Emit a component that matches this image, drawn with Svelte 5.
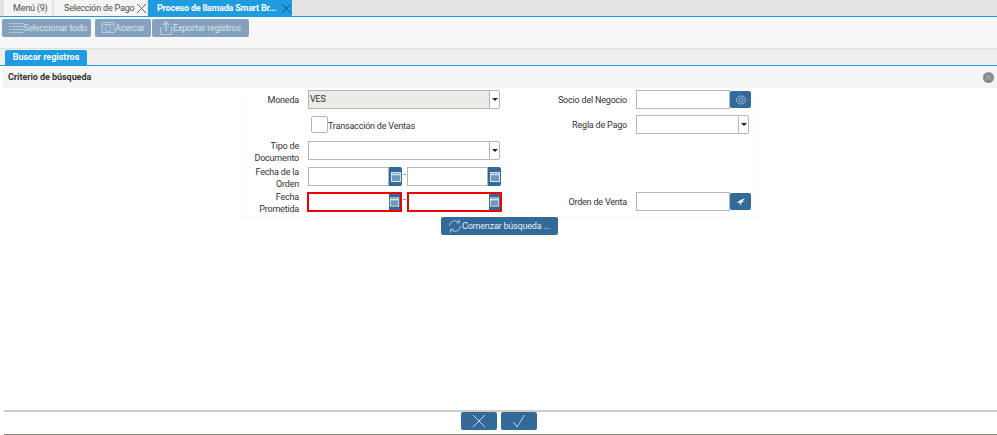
<script>
  let tabs = [
    { label: 'Menú (9)', w: 48 },
    { label: 'Selección de Pago', w: 93, close: true },
    { label: 'Proceso de llamada Smart Br...', w: 144, close: true, active: true }
  ];
</script>

{#snippet calendar()}
  <svg viewBox="0 0 12 12" width="12" height="12" fill="#6f97ba" stroke="#d5e3ef" stroke-width="1">
    <rect x="1.5" y="1.5" width="9" height="9" />
    <path d="M1.500 3.500h9" stroke-width="1.500" />
  </svg>
{/snippet}

{#snippet dateInput(required)}
  <div class="date" class:required>
    <div class="date-box"></div>
    <div class="date-btn">{@render calendar()}</div>
  </div>
{/snippet}

{#snippet combo(disabled)}
  <div class="combo" class:disabled>
    <div class="combo-text">{disabled ? 'VES' : ''}</div>
    <div class="combo-btn"><span class="arrow"></span></div>
  </div>
{/snippet}

<div class="page">
  <div class="tabbar">
    {#each tabs as tab}
      <div class="tab" class:active={tab.active} style="width: {tab.w}px">
        <span class="tab-label">{tab.label}</span>
        {#if tab.close}
          <svg class="tab-close" viewBox="0 0 11 11" width="11" height="11">
            <path d="M1 1l9 9M10 1l-9 9" stroke={tab.active ? '#1f4a68' : '#5f6468'} stroke-width="1" fill="none" />
          </svg>
        {/if}
      </div>
    {/each}
  </div>

  <div class="toolbar">
    <div class="tool select">
      <svg viewBox="0 0 14 12" width="14" height="12" fill="none" stroke="#b9cad9">
        <path d="M0 1.500h2M3 1.500h11M0 4.500h2M3 4.500h11M0 7.500h2M3 7.500h11M0 10.500h2M3 10.500h11" />
      </svg>
      <span>Seleccionar todo</span>
    </div>
    <div class="tool zoom">
      <svg viewBox="0 0 14 12" width="14" height="12" fill="none" stroke="#b9cad9">
        <path d="M1 .5h12v10h-12zM1 2.500h12" />
        <circle cx="7" cy="6.500" r="3" />
        <path d="M9 9l2 2.500" />
      </svg>
      <span>Acercar</span>
    </div>
    <div class="tool export">
      <svg viewBox="0 0 14 14" width="14" height="14" fill="none" stroke="#b9cad9">
        <path d="M3.500 6.500h-2v7h11v-7h-2" />
        <path d="M7 10V1M4 4l3-3 3 3" stroke-width="1.600" />
      </svg>
      <span>Exportar registros</span>
    </div>
  </div>

  <div class="subtabs">
    <div class="subtab">Buscar registros</div>
  </div>

  <div class="group-head">
    <span>Criterio de búsqueda</span>
    <span class="collapse">
      <svg viewBox="0 0 5 5" width="5" height="5" fill="none" stroke="#bcbcbc" stroke-width="1">
        <path d="M.5 2.500l2-2 2 2M.5 4.500l2-2 2 2" />
      </svg>
    </span>
  </div>

  <div class="form">
    <div class="label one">Moneda</div>
    <div class="field">{@render combo(true)}</div>
    <div class="label one">Socio del Negocio</div>
    <div class="field">
      <div class="search">
        <div class="search-box"></div>
        <div class="search-btn">
          <svg viewBox="0 0 10 10" width="10" height="10" fill="none" stroke="#9fbbd2" stroke-width="1">
            <ellipse cx="5" cy="5" rx="4.500" ry="4" />
            <circle cx="5" cy="5" r="2" />
          </svg>
        </div>
      </div>
    </div>

    <div class="label"></div>
    <div class="field check-field">
      <span class="check"></span>
      <span class="check-text">Transacción de Ventas</span>
    </div>
    <div class="label one">Regla de Pago</div>
    <div class="field">
      <div class="combo short">
        <div class="combo-text"></div>
        <div class="combo-btn"><span class="arrow"></span></div>
      </div>
    </div>

    <div class="label">Tipo de<br />Documento</div>
    <div class="field">{@render combo(false)}</div>
    <div class="label"></div>
    <div class="field"></div>

    <div class="label">Fecha de la<br />Orden</div>
    <div class="field range">
      {@render dateInput(false)}
      <span class="dash">-</span>
      {@render dateInput(false)}
    </div>
    <div class="label"></div>
    <div class="field"></div>

    <div class="label">Fecha<br />Prometida</div>
    <div class="field range">
      {@render dateInput(true)}
      <span class="dash">-</span>
      {@render dateInput(true)}
    </div>
    <div class="label one">Orden de Venta</div>
    <div class="field">
      <div class="search">
        <div class="search-box"></div>
        <div class="search-btn">
          <svg viewBox="0 0 10 10" width="10" height="10" fill="#eef3f7">
            <path d="M9 1.500C6 2 3 3.500 1 6l3-.3L3.600 8.500C5 7.500 5.500 6 6 5l3-.3-2.500-.7z" />
          </svg>
        </div>
      </div>
    </div>
  </div>

  <div class="start-row">
    <div class="start">
      <svg viewBox="0 0 14 14" width="14" height="14" fill="none" stroke="#a9c2d6" stroke-width="1">
        <path d="M1.500 7a5.500 5.500 0 0 1 9.500-3.700M12.500 7a5.500 5.500 0 0 1-9.500 3.700" />
        <path d="M11.500 .5v3.300h-3.300M2.500 13.500v-3.300h3.300" />
      </svg>
      <span>Comenzar búsqueda ...</span>
    </div>
  </div>

  <div class="spacer"></div>

  <div class="footer">
    <div class="foot-btn">
      <svg viewBox="0 0 14 14" width="14" height="14" fill="none" stroke="#c3d4e2" stroke-width="1">
        <path d="M1 1l12 12M13 1l-12 12" />
      </svg>
    </div>
    <div class="foot-btn">
      <svg viewBox="0 0 14 14" width="14" height="14" fill="none" stroke="#c3d4e2" stroke-width="1">
        <path d="M1.500 8l3.500 5L12.500 1" />
      </svg>
    </div>
  </div>
</div>

<style>
  :global(body) {
    margin: 0;
    background: #fff;
  }

  .page {
    width: 997px;
    height: 435px;
    display: flex;
    flex-direction: column;
    overflow: hidden;
    font-family: Roboto, "Liberation Sans", sans-serif;
    font-size: 9px;
    letter-spacing: -0.2px;
    color: #333;
    background: #fff;
  }

  .tabbar {
    height: 16px;
    display: flex;
    gap: 2px;
    padding-left: 4px;
    background: #e3e3e3;
    border-bottom: 1px solid #1f9ce0;
    flex-shrink: 0;
  }

  .tab {
    display: flex;
    align-items: center;
    justify-content: space-between;
    box-sizing: border-box;
    padding: 0 0 0 9px;
    background: #f5f5f5;
    color: #4d4d4d;
    white-space: nowrap;
  }

  .tab:nth-child(2) {
    padding-left: 10px;
  }

  .tab.active {
    margin-left: -1px;
    background: #1f9ce0;
    color: #fff;
    font-weight: 700;
    padding-left: 9px;
  }

  .tab-close {
    flex-shrink: 0;
  }

  .toolbar {
    height: 31px;
    box-sizing: border-box;
    display: flex;
    gap: 1px;
    padding: 2px;
    background: #f7f7f7;
    flex-shrink: 0;
  }

  .tool {
    height: 18px;
    display: flex;
    align-items: center;
    box-sizing: border-box;
    padding-left: 7px;
    background: #84a2bd;
    border-radius: 2px;
    color: #dbe3ea;
    white-space: nowrap;
  }

  .tool.select {
    width: 89px;
    margin-right: 3px;
  }

  .tool.zoom {
    width: 56px;
    padding-left: 6px;
  }

  .tool.export {
    width: 97px;
  }

  .subtabs {
    height: 16px;
    display: flex;
    align-items: flex-end;
    padding-left: 5px;
    background: #eeeeee;
    border-top: 1px solid #e0e0e0;
    border-bottom: 1px solid #1f9ce0;
    flex-shrink: 0;
  }

  .subtab {
    width: 82px;
    height: 15px;
    line-height: 15px;
    text-align: center;
    background: #1f9ce0;
    color: #fff;
    font-weight: 700;
    letter-spacing: 0;
    border-radius: 2px 2px 0 0;
  }

  .group-head {
    height: 22px;
    margin-left: 3px;
    padding: 0 3px 0 5px;
    display: flex;
    align-items: center;
    justify-content: space-between;
    background: #f5f5f5;
    color: #333;
    font-weight: 700;
    letter-spacing: -0.05px;
    flex-shrink: 0;
  }

  .collapse {
    width: 11px;
    height: 11px;
    border-radius: 50%;
    background: #8a8a8a;
    display: flex;
    align-items: center;
    justify-content: center;
  }

  .form {
    width: 512px;
    margin-left: 245px;
    display: grid;
    grid-template-columns: 54px 203px 125px 130px;
    grid-template-rows: 25px 26px 26px 25px 25px;
    padding-top: 2px;
    box-shadow: 0 1px 2px rgba(0, 0, 0, 0.05);
    flex-shrink: 0;
  }

  .label {
    display: flex;
    justify-content: flex-end;
    text-align: right;
    line-height: 11.500px;
    white-space: nowrap;
  }

  .label.one {
    padding-top: 5px;
  }

  .field {
    padding-left: 9px;
    box-sizing: border-box;
  }

  .combo {
    width: 192px;
    height: 19px;
    display: flex;
    box-sizing: border-box;
  }

  .combo.short {
    width: 113px;
  }

  .combo-text {
    flex: 1;
    border: 1px solid #b5b5b5;
    border-right: 0;
    padding-left: 1px;
    line-height: 17px;
    background: #fff;
  }

  .combo.disabled .combo-text {
    background: #ebebe8;
  }

  .combo-btn {
    width: 11px;
    display: flex;
    align-items: center;
    justify-content: center;
    background: #fff;
    border: 1px solid #b5b5b5;
    box-sizing: border-box;
    border-radius: 0 2px 2px 0;
  }

  .arrow {
    width: 0;
    height: 0;
    border: 3px solid transparent;
    border-top: 3px solid #222;
    border-bottom: 0;
  }

  .check-field {
    display: flex;
    align-items: center;
    height: 19px;
    padding-left: 12px;
  }

  .check {
    width: 15px;
    height: 15px;
    border: 1px solid #b5b5b5;
    border-radius: 2px;
    background: #fff;
  }

  .check-text {
    margin-top: 2px;
  }

  .search {
    width: 115px;
    height: 19px;
    display: flex;
  }

  .search-box {
    flex: 1;
    border: 1px solid #b5b5b5;
    background: #fff;
  }

  .search-btn {
    width: 21px;
    height: 17px;
    margin-top: 1px;
    display: flex;
    align-items: center;
    justify-content: center;
    background: #336a99;
    border-radius: 2px;
  }

  .range {
    display: flex;
    align-items: flex-start;
  }

  .dash {
    width: 5px;
    text-align: center;
    line-height: 14px;
  }

  .date {
    width: 94px;
    height: 19px;
    display: flex;
    box-sizing: border-box;
  }

  .date-box {
    flex: 1;
    border: 1px solid #b5b5b5;
    background: #fff;
  }

  .date-btn {
    width: 13px;
    display: flex;
    align-items: center;
    justify-content: center;
    background: #336a99;
    border-radius: 0 2px 2px 0;
  }

  .date.required {
    border: 2px solid #f00000;
    width: 95px;
    height: 20px;
  }

  .date.required:first-child {
    margin-left: -1px;
  }

  .date.required .date-box {
    border: 0;
  }

  .date.required .date-btn {
    width: 11px;
    border-radius: 0;
  }

  .start-row {
    display: flex;
    padding-left: 441px;
    flex-shrink: 0;
  }

  .start {
    width: 117px;
    height: 18px;
    box-sizing: border-box;
    display: flex;
    align-items: center;
    padding-left: 7px;
    background: #336a99;
    border-radius: 2px;
    color: #e6edf3;
    white-space: nowrap;
  }

  .spacer {
    flex: 1;
  }

  .footer {
    height: 25px;
    box-sizing: border-box;
    border-top: 2px solid #cfcdc7;
    border-bottom: 1px solid #8f8b7c;
    margin-left: 4px;
    padding-right: 4px;
    display: flex;
    justify-content: center;
    gap: 4px;
    flex-shrink: 0;
  }

  .foot-btn {
    width: 36px;
    height: 18px;
    display: flex;
    align-items: center;
    justify-content: center;
    background: #336a99;
    border-radius: 2px;
  }
</style>
